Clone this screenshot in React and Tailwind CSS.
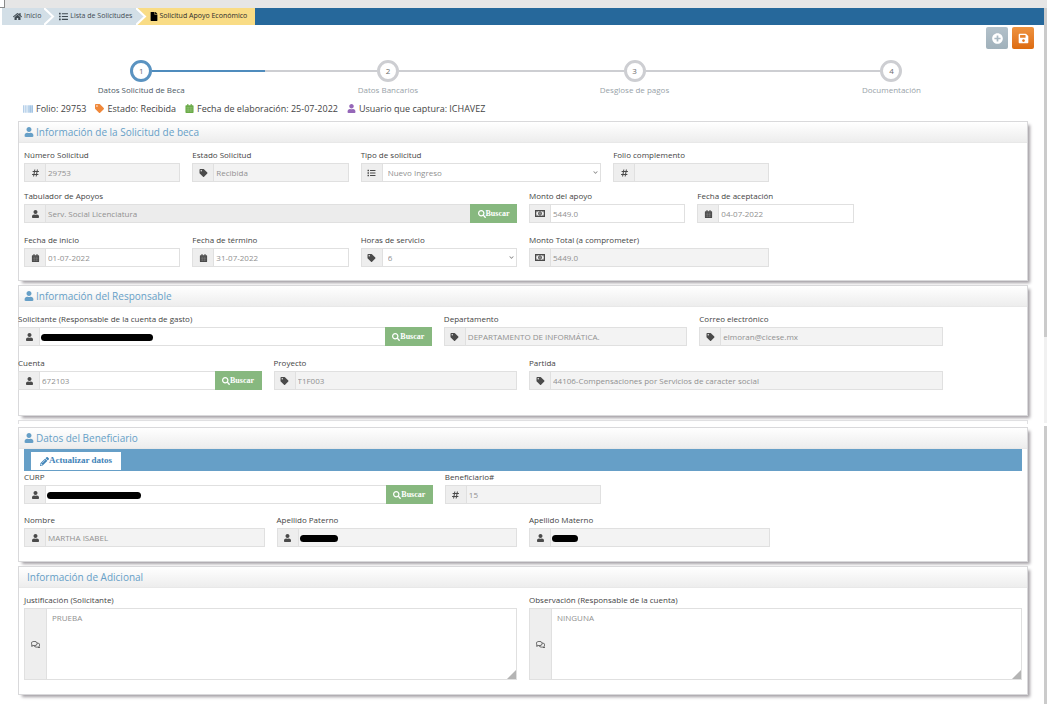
import React from "react";
import {
  FaBarcode,
  FaChevronDown,
  FaFile,
  FaHashtag,
  FaHome,
  FaList,
  FaPencilAlt,
  FaPlusCircle,
  FaRegComments,
  FaSave,
  FaSearch,
  FaTag,
  FaUser,
} from "react-icons/fa";

const steps = [
  { label: "Datos Solicitud de Beca", active: true },
  { label: "Datos Bancarios" },
  { label: "Desglose de pagos" },
  { label: "Documentación" },
];

const CalendarIcon = ({ className }) => (
  <svg viewBox="0 0 18 20" className={className} fill="currentColor" aria-hidden="true">
    <path d="M4 0 h2.5 v3 h5 V0 H14 v3 h2.5 Q18 3 18 4.5 V18.5 Q18 20 16.5 20 H1.5 Q0 20 0 18.5 V4.5 Q0 3 1.5 3 H4 Z" />
    <path
      d="M2 7.5 H16 M2 11.5 H16 M2 15.5 H16 M6 7.5 V18 M12 7.5 V18"
      stroke="#fff"
      strokeWidth="0.9"
      opacity="0.4"
    />
  </svg>
);

const MoneyIcon = () => (
  <svg viewBox="0 0 20 14" className="h-[7px] w-[10px] text-[#4a4a4a]" aria-hidden="true">
    <rect x="1.2" y="1.2" width="17.6" height="11.6" fill="none" stroke="currentColor" strokeWidth="2.4" />
    <ellipse cx="10" cy="7" rx="3.6" ry="4.4" fill="currentColor" />
    <path d="M10 4.6 V9.4" stroke="#eee" strokeWidth="1.6" />
    <path d="M2 5 L5 2 M15 2 L18 5 M2 9 L5 12 M15 12 L18 9" stroke="currentColor" strokeWidth="1.6" />
  </svg>
);

const Separator = ({ from, to }) => (
  <svg viewBox="0 0 11 17" className="h-[17px] w-[11px] shrink-0" aria-hidden="true">
    <rect width="11" height="17" fill={to} />
    <path d="M0 0 L9 8.5 L0 17 Z" fill={from} />
    <path d="M0 0 L9 8.5 L0 17" fill="none" stroke="#fff" strokeWidth="2" />
  </svg>
);

const Breadcrumb = () => (
  <nav className="flex h-[17px] bg-[#26689b] text-[7px] text-[#3f4a52]">
    <a href="#inicio" className="flex items-center gap-[2px] bg-[#d3dfe7] pl-[11px] pr-[3px]">
      <FaHome className="h-[9px] w-[9px]" />
      Inicio
    </a>
    <Separator from="#d3dfe7" to="#d3dfe7" />
    <a href="#solicitudes" className="flex items-center gap-[2px] bg-[#d3dfe7] pl-1 pr-1">
      <FaList className="h-[9px] w-[9px]" />
      Lista de Solicitudes
    </a>
    <Separator from="#d3dfe7" to="#f9dc85" />
    <a
      href="#solicitud"
      aria-current="page"
      className="flex items-center gap-[1px] bg-[#f9dc85] pl-[3px] pr-2 text-[#2b2b2b]"
    >
      <FaFile className="h-[9px] w-[8px] text-black" />
      Solicitud Apoyo Económico
    </a>
  </nav>
);

const Stepper = () => (
  <ol className="mr-[3px] grid grid-cols-[24fr_24fr_24fr_26fr]">
    {steps.map((step, i) => (
      <li key={step.label}>
        <div className="flex items-center">
          <span className={`h-[2px] flex-1 ${i === 0 ? "bg-transparent" : "bg-[#cdced2]"}`} />
          <span
            className={`flex h-[22px] w-[22px] items-center justify-center rounded-full border-[3px] bg-white text-[8px] text-[#6b6b6b] ${
              step.active ? "border-[#5a93c1]" : "border-[#cdced2]"
            }`}
          >
            {i + 1}
          </span>
          <span
            className={`h-[2px] flex-1 ${
              step.active ? "bg-[#4f8cbd]" : i === steps.length - 1 ? "bg-transparent" : "bg-[#cdced2]"
            }`}
          />
        </div>
        <p
          className={`mt-[2px] text-center text-[8px] leading-[12px] ${
            step.active ? "text-[#4d5a66]" : "text-[#98a2a8]"
          }`}
        >
          {step.label}
        </p>
      </li>
    ))}
  </ol>
);

const Panel = ({ title, icon = true, className = "", children }) => (
  <section
    className={`border border-[#d9d9db] bg-white shadow-[3px_3px_3px_-1px_#a39fa4] ${className}`}
  >
    <h2 className="flex h-[21px] items-center gap-[2px] border-b border-[#e8e8e8] bg-linear-to-b from-white to-[#ededed] pl-[5px] text-[10px] text-[#669fc7]">
      {icon ? <FaUser className="h-[10px] w-[10px]" /> : <span className="w-[1px]" />}
      {title}
    </h2>
    {children}
  </section>
);

const Row = ({ className = "", children }) => (
  <div className={`grid grid-cols-12 ${className}`}>{children}</div>
);

const Addon = ({ icon: Icon }) => (
  <span className="flex w-[21px] shrink-0 items-center justify-center border-r border-[#e0e0e0] bg-[#eeeeee]">
    <Icon className="h-[8px] w-[9px] text-[#4a4a4a]" />
  </span>
);

const SearchButton = () => (
  <button
    type="button"
    className="-my-px -mr-px flex w-[47px] shrink-0 items-center justify-center bg-[#87b87f] font-['Liberation_Serif',serif] text-[8px] font-bold text-white"
  >
    <FaSearch className="h-[8px] w-[8px]" />
    Buscar
  </button>
);

const Field = ({ id, label, icon, value = "", span, readOnly, dark, options, search, redacted }) => {
  const bg = dark ? "bg-[#ececec]" : readOnly ? "bg-[#f3f3f3]" : "bg-white";
  return (
    <div className={`px-[6px] ${span}`}>
      <label htmlFor={id} className="block text-[8px] leading-[12px] text-[#444]">
        {label}
      </label>
      <div className={`mt-[2px] flex h-[19px] border border-[#e0e0e0] ${bg}`}>
        <Addon icon={icon} />
        <div className="relative flex min-w-0 flex-1">
          {options ? (
            <>
              <select
                id={id}
                defaultValue={value}
                className="w-full appearance-none bg-transparent pl-[5px] text-[8px] text-[#909090] outline-none"
              >
                {options.map((o) => (
                  <option key={o}>{o}</option>
                ))}
              </select>
              <FaChevronDown className="pointer-events-none absolute right-[2px] top-[6px] h-[5px] w-[5px] text-[#888]" />
            </>
          ) : (
            <input
              id={id}
              type="text"
              defaultValue={value}
              readOnly={readOnly || dark}
              className="w-full min-w-0 bg-transparent px-[2px] text-[8px] text-[#909090] outline-none"
            />
          )}
          {redacted && (
            <span className={`absolute left-[1px] top-[6px] h-[7px] rounded-full bg-black ${redacted}`} />
          )}
        </div>
        {search && <SearchButton />}
      </div>
    </div>
  );
};

const TextField = ({ id, label, value }) => (
  <div className="col-span-6 px-[6px]">
    <label htmlFor={id} className="block text-[8px] leading-[12px] text-[#444]">
      {label}
    </label>
    <div className="relative mt-[2px] flex h-[72px] border border-[#e0e0e0]">
      <span className="flex w-[22px] shrink-0 items-center justify-center border-r border-[#e0e0e0] bg-[#eeeeee]">
        <FaRegComments className="h-[9px] w-[9px] text-[#555]" />
      </span>
      <textarea
        id={id}
        defaultValue={value}
        className="w-full resize-none px-[5px] py-[3px] text-[8px] leading-[12px] text-[#909090] outline-none"
      />
      <svg viewBox="0 0 9 9" className="absolute bottom-0 right-0 h-[9px] w-[9px]" aria-hidden="true">
        <path d="M9 0 V9 H0 Z" fill="#b4b4b4" />
      </svg>
    </div>
  </div>
);

const App = () => (
  <div className="flex bg-white font-['Open_Sans',sans-serif] text-[#444]">
    <div className="min-w-0 flex-1">
      <div className="flex h-[8px] bg-[#e6e6e6]">
        <span className="h-[8px] w-[5px] border-b border-r border-[#8a8a8a] bg-white" />
      </div>
      <div className="pl-[2px]">
        <Breadcrumb />
      </div>

      <main className="pb-[9px] pl-[18px] pr-4">
        <div className="-mr-[6px] flex justify-end gap-1 pt-[2px]">
          <button
            type="button"
            aria-label="Agregar"
            className="flex h-[22px] w-[22px] items-center justify-center rounded-[2px] bg-linear-to-b from-[#b3c1ca] to-[#a0b1bb] text-white"
          >
            <FaPlusCircle className="h-[11px] w-[11px]" />
          </button>
          <button
            type="button"
            aria-label="Guardar"
            className="flex h-[22px] w-[22px] items-center justify-center rounded-[2px] bg-linear-to-b from-[#ee933f] to-[#dd6b0c] text-white"
          >
            <FaSave className="h-[11px] w-[11px]" />
          </button>
        </div>

        <div className="pt-[11px]">
          <Stepper />
        </div>

        <div className="mt-[6px] flex h-[13px] items-center gap-[9px] pl-[5px] text-[9px]">
          <span className="flex items-center gap-[3px]">
            <FaBarcode className="h-[10px] w-[10px] text-[#6fa3d4]" />
            Folio: 29753
          </span>
          <span className="flex items-center gap-[3px]">
            <FaTag className="h-[9px] w-[9px] text-[#f0883a]" />
            Estado: Recibida
          </span>
          <span className="flex items-center gap-[3px]">
            <CalendarIcon className="h-[9px] w-[9px] text-[#69aa46]" />
            Fecha de elaboración: 25-07-2022
          </span>
          <span className="flex items-center gap-[3px]">
            <FaUser className="h-[9px] w-[9px] text-[#9567b8]" />
            Usuario que captura: ICHAVEZ
          </span>
        </div>

        <form>
          <Panel title="Información de la Solicitud de beca" className="mt-[6px] pb-[13px]">
            <div className="-mx-px">
              <Row className="pt-[6px]">
                <Field id="numero" label="Número Solicitud" icon={FaHashtag} value="29753" span="col-span-2" readOnly />
                <Field id="estado" label="Estado Solicitud" icon={FaTag} value="Recibida" span="col-span-2" readOnly />
                <Field
                  id="tipo"
                  label="Tipo de solicitud"
                  icon={FaList}
                  value="Nuevo Ingreso"
                  options={["Nuevo Ingreso", "Renovación"]}
                  span="col-span-3"
                />
                <Field id="complemento" label="Folio complemento" icon={FaHashtag} span="col-span-2" readOnly />
              </Row>
              <Row className="pt-2">
                <Field
                  id="tabulador"
                  label="Tabulador de Apoyos"
                  icon={FaUser}
                  value="Serv. Social Licenciatura"
                  span="col-span-6"
                  dark
                  search
                />
                <Field id="monto" label="Monto del apoyo" icon={MoneyIcon} value="5449.0" span="col-span-2" />
                <Field id="aceptacion" label="Fecha de aceptación" icon={CalendarIcon} value="04-07-2022" span="col-span-2" />
              </Row>
              <Row className="pt-[11px]">
                <Field id="inicio" label="Fecha de inicio" icon={CalendarIcon} value="01-07-2022" span="col-span-2" />
                <Field id="termino" label="Fecha de término" icon={CalendarIcon} value="31-07-2022" span="col-span-2" />
                <Field
                  id="horas"
                  label="Horas de servicio"
                  icon={FaTag}
                  value="6"
                  options={["4", "6", "8"]}
                  span="col-span-2"
                />
                <Field
                  id="total"
                  label="Monto Total (a comprometer)"
                  icon={MoneyIcon}
                  value="5449.0"
                  span="col-span-3"
                  readOnly
                />
              </Row>
            </div>
          </Panel>

          <Panel title="Información del Responsable" className="mt-1 pb-[25px]">
            <div className="-mx-[7px]">
              <Row className="pt-[6px]">
                <Field
                  id="solicitante"
                  label="Solicitante (Responsable de la cuenta de gasto)"
                  icon={FaUser}
                  span="col-span-5"
                  search
                  redacted="w-[112px]"
                />
                <Field
                  id="departamento"
                  label="Departamento"
                  icon={FaTag}
                  value="DEPARTAMENTO DE INFORMÁTICA."
                  span="col-span-3"
                  readOnly
                />
                <Field id="correo" label="Correo electrónico" icon={FaTag} value="elmoran@cicese.mx" span="col-span-3" readOnly />
              </Row>
              <Row className="pt-[11px]">
                <Field id="cuenta" label="Cuenta" icon={FaUser} value="672103" span="col-span-3" search />
                <Field id="proyecto" label="Proyecto" icon={FaTag} value="T1F003" span="col-span-3" readOnly />
                <Field
                  id="partida"
                  label="Partida"
                  icon={FaTag}
                  value="44106-Compensaciones por Servicios de caracter social"
                  span="col-span-5"
                  readOnly
                />
              </Row>
            </div>
          </Panel>

          <div className="mt-1 h-[4px] border-x border-t border-[#e0e0e2]" />

          <Panel title="Datos del Beneficiario" className="mt-[3px] pb-[14px]">
            <div className="mx-[5px] flex h-[22px] bg-[#669fc7] pl-[7px] pt-[3px]">
              <button
                type="button"
                className="flex h-[18px] w-[90px] items-center justify-center bg-white font-['Liberation_Serif',serif] text-[9px] font-bold text-[#3f83b8]"
              >
                <FaPencilAlt className="h-[9px] w-[9px]" />
                Actualizar datos
              </button>
            </div>
            <div className="-mx-px">
              <Row>
                <Field id="curp" label="CURP" icon={FaUser} span="col-span-5" search redacted="w-[94px]" />
                <Field id="beneficiario" label="Beneficiario#" icon={FaHashtag} value="15" span="col-span-2" readOnly />
              </Row>
              <Row className="pt-[10px]">
                <Field id="nombre" label="Nombre" icon={FaUser} value="MARTHA ISABEL" span="col-span-3" readOnly />
                <Field id="paterno" label="Apellido Paterno" icon={FaUser} span="col-span-3" readOnly redacted="w-[38px]" />
                <Field id="materno" label="Apellido Materno" icon={FaUser} span="col-span-3" readOnly redacted="w-[26px]" />
              </Row>
            </div>
          </Panel>

          <Panel title="Información de Adicional" icon={false} className="mt-1 pb-[14px]">
            <div className="-mx-px">
              <Row className="pt-[6px]">
                <TextField id="justificacion" label="Justificación (Solicitante)" value="PRUEBA" />
                <TextField id="observacion" label="Observación (Responsable de la cuenta)" value="NINGUNA" />
              </Row>
            </div>
          </Panel>
        </form>
      </main>
    </div>

    {/* scroll rail */}
    <div className="mr-[3px] flex w-[3px] flex-col" aria-hidden="true">
      <div className="h-[8px] bg-[#e6e6e6]" />
      <div className="grow-[329] bg-[#cbcbcb]" />
      <div className="grow-[86] bg-[#f1f1f1]" />
      <div className="h-[3px]" />
      <div className="grow-[278] bg-[#cbcbcb]" />
    </div>
  </div>
);

export default App;
